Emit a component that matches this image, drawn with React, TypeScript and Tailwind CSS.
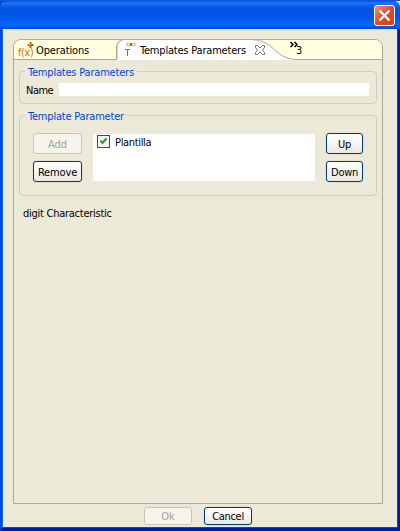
import React from "react";

type ButtonProps = { label: string; className: string; disabled?: boolean; text?: string };

function XpButton({ label, className, disabled, text = "" }: ButtonProps) {
  return (
    <button
      disabled={disabled}
      className={`flex items-center justify-center rounded-[3px] border whitespace-nowrap ${
        disabled
          ? "border-[#c9c7ba] bg-[#f5f4ea] text-[#a1a192]"
          : "border-[#003c74] bg-linear-to-b from-white via-[#f5f5f1] to-[#e9e7e0] text-black shadow-[0_0_0_1px_#e5e2d2]"
      } ${className}`}
    >
      <span className={`block ${text}`}>{label}</span>
    </button>
  );
}

type GroupProps = { title: string; titleClass: string; className: string; children: React.ReactNode };

function Group({ title, titleClass, className, children }: GroupProps) {
  return (
    <fieldset className={`relative rounded-[4px] border border-[#d0d0bf] ${className}`}>
      <div className={`absolute -top-[6px] left-[5px] h-[14px] bg-[#ece9d8] pl-[3px] leading-[14px] whitespace-nowrap text-[#0046d5] ${titleClass}`}>
        {title}
      </div>
      {children}
    </fieldset>
  );
}

function TitleBar() {
  return (
    <header className="flex h-[28px] shrink-0 justify-end rounded-t-[6px] bg-[linear-gradient(to_bottom,#0842b8_0px,#1f72f0_1px,#1a70f2_3px,#0560ea_5px,#0055e4_8px,#0054e3_14px,#005ff4_19px,#0066ff_24px,#005be8_26px,#0046cc_28px)] pt-[4px] pr-[5px]">
      <button aria-label="Close" className="flex h-[21px] w-[21px] items-center justify-center rounded-[3px] border border-white bg-linear-to-br from-[#ee9277] via-[#df4b25] to-[#d0431c]">
        <svg width="19" height="19" viewBox="0 0 19 19" fill="none" stroke="#fff" strokeWidth="2.2">
          <path d="M4.500 4.500 L14.500 14.500 M14.500 4.500 L4.500 14.500" />
        </svg>
      </button>
    </header>
  );
}

function TabBar() {
  return (
    <div className="relative flex h-[20px] shrink-0 items-center rounded-t-[7px] border-b border-[#aca899] bg-[#ffffe1]">
      <svg className="absolute top-0 left-0 overflow-visible" width="368" height="20" viewBox="0 0 368 20" fill="none">
        <path d="M103 20 V7 Q103 0 109 0 H240 C260 0 261 18 281 19.500 V20 Z" fill="#fff" />
        <path d="M103.500 19 V7 Q104 1 109 .5" stroke="#d6d3c8" />
        <path d="M102.500 19 V7 Q102.500 1 109 -.5 M238 -.5 C260 0 260 18 281 19.500" stroke="#aca899" />
        <path d="M16.500 2 V8 M13.500 5 H19.500" stroke="#bd6500" strokeWidth="2" />
        <path d="M14 4.500 H17" stroke="#ffa23a" />
        <path d="M114.500 3 L112.500 4.500 L114.500 6 M119.500 3 L121.500 4.500 L119.500 6" stroke="#d98a3c" />
        <path d="M115.500 3 H118.500 V6 H115.500 Z" fill="#d56c00" />
        <path d="M111 9.500 H116 M113.500 9.500 V16" stroke="#c8660a" />
        <path d="M241.500 5.500 H243.500 L246 8 L248.500 5.500 H250.500 V7.500 L248.500 10 L250.500 12.500 V14.500 H248.500 L246 12 L243.500 14.500 H241.500 V12.500 L243.500 10 L241.500 7.500 Z" stroke="#777568" fill="#fff" />
        <path d="M276.500 2 L279 4.500 L276.500 7 M280.500 2 L283 4.500 L280.500 7" stroke="#000" strokeWidth="1.500" />
      </svg>
      <span className="relative ml-[4px] w-[16px] pt-[5px] text-[10.500px] leading-[14px] tracking-[-0.2px] whitespace-nowrap text-[#d0690a]">f(x)</span>
      <span className="relative ml-[2px] w-[104px] pt-[3px] leading-[14px] tracking-[-0.13px] whitespace-nowrap">Operations</span>
      <span className="relative w-[156px] pt-[3px] leading-[14px] tracking-[-0.2px] whitespace-nowrap">Templates Parameters</span>
      <span className="relative pt-[3px] leading-[14px] tracking-[-0.5px]">3</span>
    </div>
  );
}

export default function App() {
  return (
    <div className="h-[531px] w-[400px] overflow-hidden bg-[linear-gradient(to_right,#0a3db8_0px,#1767e8_50%,#dbe6f8_100%)] font-['DejaVu_Sans_Condensed','DejaVu_Sans',sans-serif] text-[11px] text-black">
      <div className="flex h-[531px] w-[400px] flex-col border-t border-[#0b55e0]">
        <TitleBar />
        <div className="flex min-h-0 flex-1 flex-col border-r-[2px] border-b-[3px] border-l-[2px] border-r-[#0019a6] border-b-[#001ca8] border-l-[#0046e0] bg-[#ece9d8] shadow-[inset_1px_0_#1668f0,inset_-1px_0_#0046dc,inset_0_-1px_#0046dc]">
          <main className="mt-[10px] mr-[15px] ml-[11px] flex h-[465px] shrink-0 flex-col rounded-t-[8px] border border-[#aca899]">
            <TabBar />
            <Group title="Templates Parameters" titleClass="w-[112px] tracking-[-0.2px]" className="mx-[5px] mt-[11px] flex h-[33px] shrink-0 pt-[11px] pl-[6px]">
              <label className="w-[33px] pt-px leading-[14px] tracking-[-0.5px]">Name</label>
              <input className="h-[13px] w-[310px] bg-white outline-none" />
            </Group>
            <Group title="Template Parameter" titleClass="w-[102px] tracking-[-0.2px]" className="mx-[5px] mt-[11px] flex h-[81px] shrink-0 pt-[17px] pl-[13px]">
              <div className="flex w-[60px] flex-col gap-[7px]">
                <XpButton label="Add" disabled className="h-[21px] w-[49px]" text="pt-[3px]" />
                <XpButton label="Remove" className="h-[21px] w-[49px]" text="pt-[3px] tracking-[-0.15px]" />
              </div>
              <div className="mt-[1px] flex h-[47px] w-[222px] items-start bg-white pt-[1px] pl-[4px]">
                <span className="flex h-[13px] w-[13px] items-center justify-center border border-[#1c5180] bg-[#f3f3ef]">
                  <svg width="11" height="11" viewBox="0 0 11 11" fill="none" stroke="#21a121" strokeWidth="2">
                    <path d="M2.500 4.500 L4.500 7 L8.500 2.500" />
                  </svg>
                </span>
                <span className="ml-[5px] pt-px leading-[14px] tracking-[-0.33px]">Plantilla</span>
              </div>
              <div className="ml-[11px] flex flex-col gap-[7px]">
                <XpButton label="Up" className="h-[21px] w-[37px]" text="pt-[3px] tracking-[-0.3px]" />
                <XpButton label="Down" className="h-[21px] w-[37px]" text="pt-[3px] tracking-[-0.3px]" />
              </div>
            </Group>
            <p className="mt-[11px] ml-[9px] leading-[14px] tracking-[-0.26px] whitespace-nowrap">digit Characteristic</p>
          </main>
          <footer className="mt-[3px] ml-[142px] flex gap-[12px]">
            <XpButton label="Ok" disabled className="h-[18px] w-[48px]" text="pt-[2px]" />
            <XpButton label="Cancel" className="h-[18px] w-[48px]" text="pt-[2px] tracking-[-0.3px]" />
          </footer>
        </div>
      </div>
    </div>
  );
}
